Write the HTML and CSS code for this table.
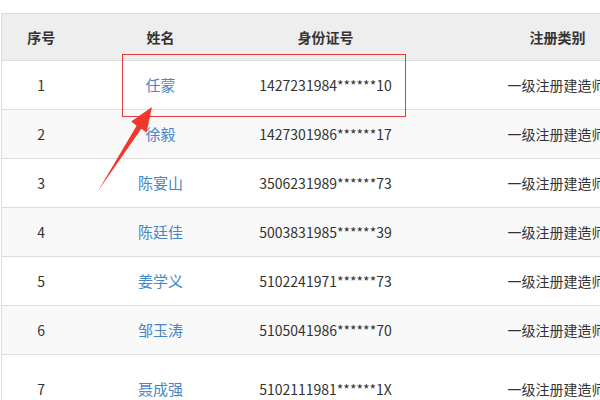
FILE: index.html
```html
<!DOCTYPE html>
<html lang="zh">
<head>
<meta charset="utf-8">
<link rel="stylesheet" href="styles.css">
</head>
<body>
<div class="page">
  <table class="grid">
    <colgroup>
      <col class="c1"><col class="c2"><col class="c3"><col class="c4">
    </colgroup>
    <thead>
      <tr><th>序号</th><th>姓名</th><th>身份证号</th><th>注册类别</th></tr>
    </thead>
    <tbody>
      <tr><td>1</td><td><a class="name">任蒙</a></td><td>1427231984******10</td><td class="cat">一级注册建造师</td></tr>
      <tr><td>2</td><td><a class="name">徐毅</a></td><td>1427301986******17</td><td class="cat">一级注册建造师</td></tr>
      <tr><td>3</td><td><a class="name">陈宴山</a></td><td>3506231989******73</td><td class="cat">一级注册建造师</td></tr>
      <tr><td>4</td><td><a class="name">陈廷佳</a></td><td>5003831985******39</td><td class="cat">一级注册建造师</td></tr>
      <tr><td>5</td><td><a class="name">姜学义</a></td><td>5102241971******73</td><td class="cat">一级注册建造师</td></tr>
      <tr><td>6</td><td><a class="name">邹玉涛</a></td><td>5105041986******70</td><td class="cat">一级注册建造师</td></tr>
      <tr class="tall"><td>7</td><td><a class="name">聂成强</a></td><td>5102111981******1X</td><td class="cat">一级注册建造师</td></tr>
    </tbody>
  </table>
  <div class="highlight"></div>
  <svg class="arrow" width="600" height="400" viewBox="0 0 600 400">
    <polygon points="152,107 146.6,132.6 141.3,128.8 98,191 136.6,125.8 131.2,121.6" fill="#f2372f"/>
  </svg>
</div>
</body>
</html>
```
FILE: styles.css
```css
html, body {
  margin: 0;
  padding: 0;
  background: #fff;
}
.page {
  position: relative;
  width: 600px;
  height: 400px;
  overflow: hidden;
  padding-top: 13px;
  box-sizing: border-box;
  font-family: "Microsoft YaHei", "Noto Sans CJK SC", "Noto Sans", sans-serif;
  font-size: 14px;
  color: #333;
}
.grid {
  margin-left: 1px;
  width: 703px;
  table-layout: fixed;
  border-collapse: collapse;
  border-left: 1px solid #ddd;
  border-top: 1px solid #ddd;
}
.c1 { width: 79px; }
.c2 { width: 160px; }
.c3 { width: 170px; }
.c4 { width: 294px; }
th {
  background: #eee;
  height: 46px;
  padding: 0;
  font-weight: bold;
  text-align: center;
  border-bottom: 1px solid #ddd;
  line-height: 20px;
}
td {
  height: 48px;
  padding: 0;
  text-align: center;
  border-bottom: 1px solid #ddd;
  line-height: 20px;
  white-space: nowrap;
}
tbody tr:nth-child(even) td {
  background: #f9f9f9;
}
tr.tall td {
  height: 67px;
}
.cat {
  text-align: left;
  padding-left: 97px;
}
.name {
  color: #4787c8;
  font-size: 15px;
  text-decoration: none;
}
.highlight {
  position: absolute;
  left: 122px;
  top: 54px;
  width: 282px;
  height: 61px;
  border: 1px solid #e4393e;
}
.arrow {
  position: absolute;
  left: 0;
  top: 0;
}
```
